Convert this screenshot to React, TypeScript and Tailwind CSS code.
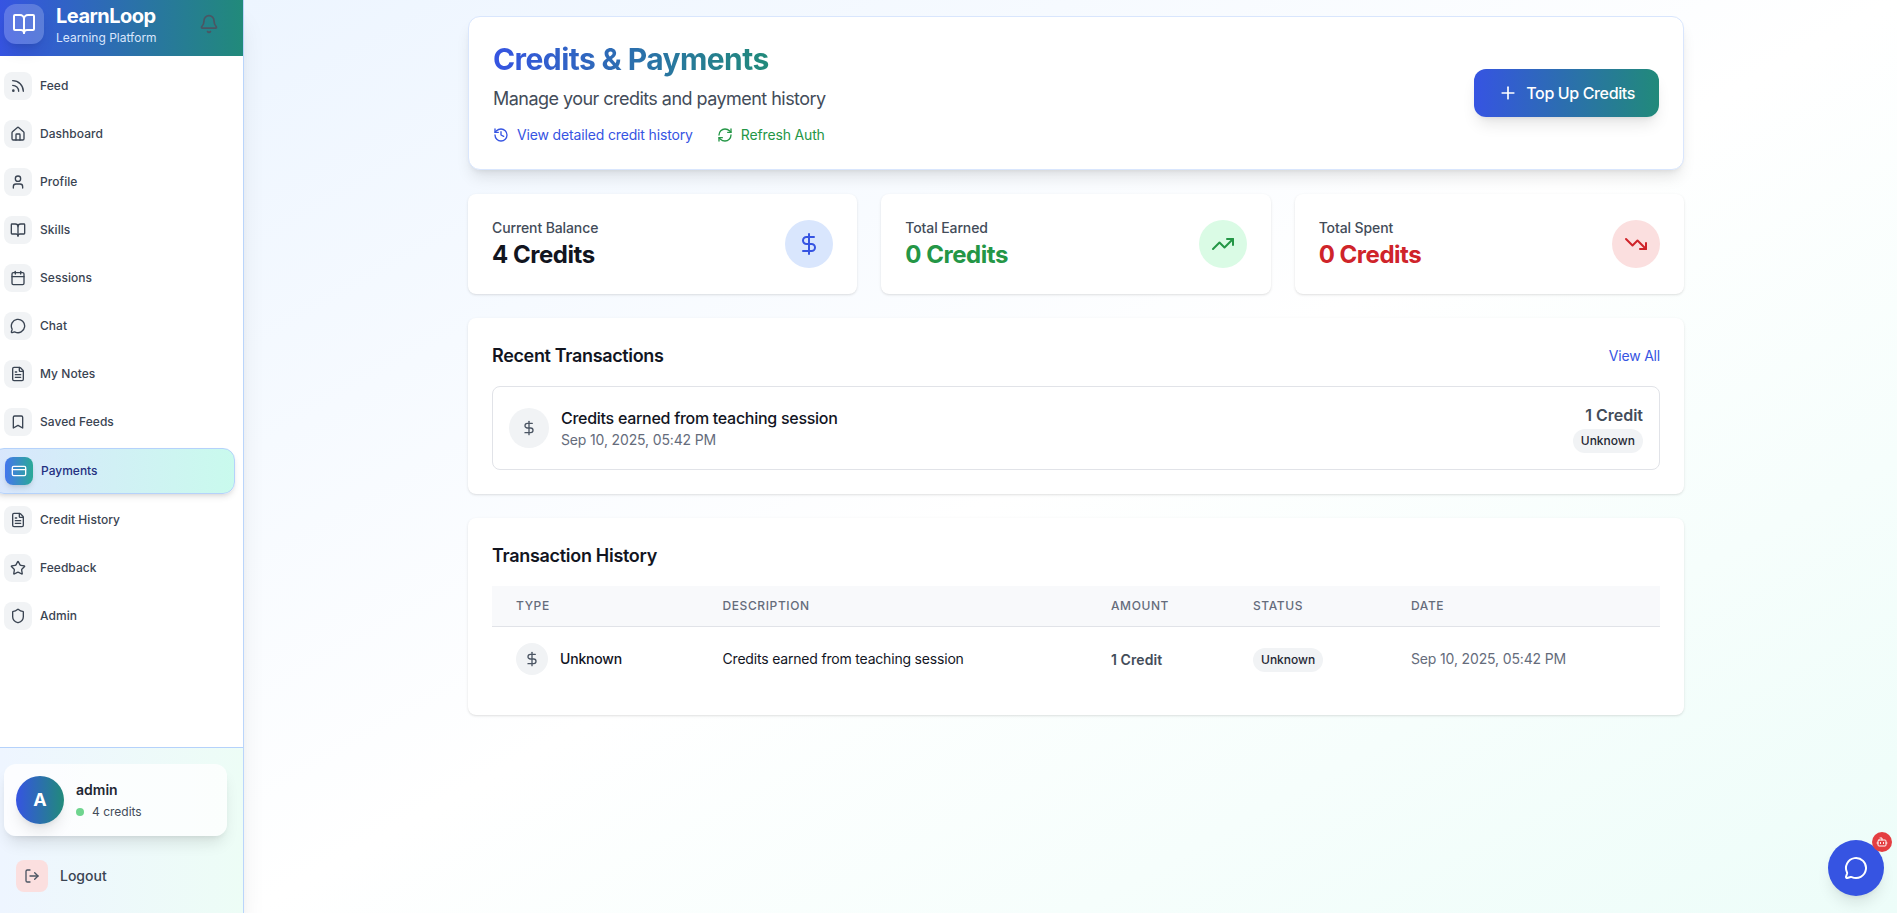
import React from "react";
import {
  Bell,
  BookOpen,
  Bot,
  Calendar,
  CreditCard,
  DollarSign,
  FileText,
  History,
  House,
  LogOut,
  MessageCircle,
  Plus,
  RefreshCw,
  Rss,
  Shield,
  Star,
  TrendingDown,
  TrendingUp,
  User,
} from "lucide-react";

type IconType = React.ComponentType<{ className?: string }>;

function BookmarkOutline({ className }: { className?: string }) {
  return (
    <svg
      viewBox="0 0 24 24"
      fill="none"
      stroke="currentColor"
      strokeWidth="2"
      strokeLinecap="round"
      strokeLinejoin="round"
      className={className}
    >
      <path d="m19 21-7-4-7 4V5a2 2 0 0 1 2-2h10a2 2 0 0 1 2 2v16z" />
    </svg>
  );
}

const navItems: { label: string; icon: IconType; active?: boolean }[] = [
  { label: "Feed", icon: Rss },
  { label: "Dashboard", icon: House },
  { label: "Profile", icon: User },
  { label: "Skills", icon: BookOpen },
  { label: "Sessions", icon: Calendar },
  { label: "Chat", icon: MessageCircle },
  { label: "My Notes", icon: FileText },
  { label: "Saved Feeds", icon: BookmarkOutline },
  { label: "Payments", icon: CreditCard, active: true },
  { label: "Credit History", icon: FileText },
  { label: "Feedback", icon: Star },
  { label: "Admin", icon: Shield },
];

function NavItem({ label, icon: Icon, active }: { label: string; icon: IconType; active?: boolean }) {
  if (active) {
    return (
      <li className="-ml-2 mr-2 flex h-[46px] items-center gap-2 rounded-xl border border-[#b5d2fb] bg-linear-to-r/srgb from-[#d9e6fd] to-[#c9faed] pl-3 text-xs font-medium text-[#243081] shadow-md">
        <span className="flex size-7 items-center justify-center rounded-lg bg-linear-to-r/srgb from-[#4576ed] to-[#2aa997] text-white shadow-md">
          <Icon className="size-4" />
        </span>
        <span>{label}</span>
      </li>
    );
  }
  return (
    <li className="flex h-11 items-center gap-2 pl-1 text-xs font-medium tracking-[0.05px] text-[#3a4452]">
      <span className="flex size-7 items-center justify-center rounded-lg bg-[#f1f3f5]">
        <Icon className="size-4" />
      </span>
      <span>{label}</span>
    </li>
  );
}

function Sidebar() {
  return (
    <aside className="relative z-10 flex w-[244px] shrink-0 flex-col overflow-clip border-r border-[#bad5fb] bg-white shadow-xl">
      <div className="flex h-14 items-start justify-between bg-linear-to-r/srgb from-[#3654e2] to-[#218a7a] pl-1 pr-6">
        <div className="flex gap-3">
          <div className="mt-1 flex size-10 items-center justify-center rounded-xl bg-white/20 text-white shadow-lg">
            <BookOpen className="size-6" />
          </div>
          <div className="flex flex-col pt-0.5">
            <h1 className="text-xl font-bold leading-7 tracking-[-0.5px] text-white">LearnLoop</h1>
            <p className="text-xs leading-4 text-[#d9e6fd]">Learning Platform</p>
          </div>
        </div>
        <Bell className="mt-3.5 size-5 text-[#4b5563]" />
      </div>
      <ul className="flex flex-1 flex-col gap-1 pt-2">
        {navItems.map((item) => (
          <NavItem key={item.label} {...item} />
        ))}
      </ul>
      <div className="flex h-[166px] flex-col border-t border-[#b5d2fb] bg-linear-to-r/srgb from-[#eef5ff] to-[#edfdf6] pl-1 pr-4 pt-4">
        <div className="flex h-[72px] items-center gap-3 rounded-xl bg-white/80 px-3 shadow-lg">
          <div className="flex size-12 items-center justify-center rounded-full bg-linear-to-r/srgb from-[#3654e2] to-[#218a7a] text-lg font-bold text-white shadow-lg">
            A
          </div>
          <div className="pt-0.5">
            <p className="text-sm font-semibold leading-5 text-[#1f2733]">admin</p>
            <p className="mt-0.5 flex items-center gap-2 text-xs leading-5 text-[#434c59]">
              <span className="size-2 rounded-full bg-[#6fd58f]" />
              4 credits
            </p>
          </div>
        </div>
        <button className="mt-3 flex h-14 items-center gap-3 px-3 text-sm font-medium text-[#3a4452]">
          <span className="flex size-8 items-center justify-center rounded-lg bg-[#fbdfdf]">
            <LogOut className="size-4 text-[#4b5563]" />
          </span>
          Logout
        </button>
      </div>
    </aside>
  );
}

function StatCard(props: { label: string; value: string; valueClass: string; badgeClass: string; icon: IconType }) {
  const Icon = props.icon;
  return (
    <div className="flex h-[100px] items-center justify-between rounded-lg bg-white p-6 shadow-sm">
      <div>
        <p className="text-sm font-medium tracking-[-0.11px] text-[#434c59]">{props.label}</p>
        <p className={"-mb-px pt-px text-2xl font-bold leading-8 tracking-[-0.47px] " + props.valueClass}>
          {props.value}
        </p>
      </div>
      <div className={"flex size-12 items-center justify-center rounded-full " + props.badgeClass}>
        <Icon className="size-6" />
      </div>
    </div>
  );
}

function StatusBadge() {
  return (
    <span className="inline-flex h-6 items-center rounded-full bg-[#f1f3f5] px-2 text-xs font-medium text-[#1f2733]">
      Unknown
    </span>
  );
}

const columns = "grid grid-cols-[206.5px_388.5px_142px_158px_1fr] [&>*]:px-6";

export default function App() {
  return (
    <div className="flex h-[913px] overflow-hidden font-['Inter',sans-serif] text-[#12151f]">
      <Sidebar />
      <main className="flex flex-1 justify-center bg-linear-to-br/srgb from-[#edf5ff] via-white to-[#edfdf9] pl-[11px] pt-4">
        <div className="flex w-[1216px] flex-col gap-6">
          <section className="flex h-[154px] items-center justify-between rounded-xl border border-[#d9e6fd] bg-white px-6 shadow-lg">
            <div>
              <h2 className="w-fit bg-linear-to-r/srgb from-[#3654e2] to-[#218a7a] bg-clip-text text-3xl font-bold tracking-[-0.58px] text-transparent">
                Credits &amp; Payments
              </h2>
              <p className="mt-2 text-lg leading-7 tracking-[-0.54px] text-[#434c59]">
                Manage your credits and payment history
              </p>
              <div className="mt-3 flex gap-6 text-sm leading-5 tracking-[-0.15px]">
                <a className="flex items-center gap-2 text-[#3654e2]">
                  <History className="size-4" />
                  View detailed credit history
                </a>
                <a className="flex items-center gap-2 text-[#249646]">
                  <RefreshCw className="size-4" />
                  Refresh Auth
                </a>
              </div>
            </div>
            <button className="flex h-12 items-center gap-2 rounded-xl bg-linear-to-r/srgb from-[#3654e2] to-[#218a7a] px-6 font-medium tracking-[-0.37px] text-white shadow-lg">
              <Plus className="size-5" />
              Top Up Credits
            </button>
          </section>

          <section className="grid grid-cols-3 gap-6">
            <StatCard
              label="Current Balance"
              value="4 Credits"
              valueClass="text-[#12151f]"
              badgeClass="bg-[#d9e6fd] text-[#3654e2]"
              icon={DollarSign}
            />
            <StatCard
              label="Total Earned"
              value="0 Credits"
              valueClass="text-[#249646]"
              badgeClass="bg-[#dafbe5] text-[#249646]"
              icon={TrendingUp}
            />
            <StatCard
              label="Total Spent"
              value="0 Credits"
              valueClass="text-[#cf242a]"
              badgeClass="bg-[#fbdfdf] text-[#cf242a]"
              icon={TrendingDown}
            />
          </section>

          <section className="rounded-lg bg-white p-6 shadow-sm">
            <div className="flex items-center justify-between">
              <h3 className="text-lg font-semibold leading-7 tracking-[-0.34px]">Recent Transactions</h3>
              <a className="text-sm tracking-[-0.2px] text-[#3654e2]">View All</a>
            </div>
            <div className="mt-4 flex h-[84px] items-center justify-between rounded-lg border border-[#e1e3e8] px-4">
              <div className="flex items-center gap-3">
                <div className="flex size-10 items-center justify-center rounded-full bg-[#f1f3f5] text-[#4b5563]">
                  <DollarSign className="size-4" />
                </div>
                <div>
                  <p className="font-medium leading-6 tracking-[-0.28px]">Credits earned from teaching session</p>
                  <p className="text-sm leading-5 tracking-[-0.15px] text-[#656c7b]">Sep 10, 2025, 05:42 PM</p>
                </div>
              </div>
              <div className="flex flex-col items-end gap-0.5">
                <p className="font-semibold leading-6 text-[#434c59]">1 Credit</p>
                <StatusBadge />
              </div>
            </div>
          </section>

          <section className="rounded-lg bg-white p-6 shadow-sm">
            <h3 className="text-lg font-semibold leading-7 tracking-[-0.3px]">Transaction History</h3>
            <div className={columns + " mt-4 h-[41px] items-center border-b border-[#e1e3e8] bg-[#f8f9fb] text-xs font-medium tracking-wider text-[#656c7b]"}>
              <span>TYPE</span>
              <span>DESCRIPTION</span>
              <span>AMOUNT</span>
              <span>STATUS</span>
              <span>DATE</span>
            </div>
            <div className={columns + " h-16 items-center text-sm"}>
              <div className="flex items-center gap-3">
                <span className="flex size-8 items-center justify-center rounded-full bg-[#f1f3f5] text-[#4b5563]">
                  <DollarSign className="size-4" />
                </span>
                <span className="font-medium tracking-[-0.2px]">Unknown</span>
              </div>
              <span className="tracking-[-0.19px]">Credits earned from teaching session</span>
              <span className="pt-0.5 font-semibold tracking-[0.08px] text-[#434c59]">1 Credit</span>
              <span className="flex pt-0.5">
                <StatusBadge />
              </span>
              <span className="tracking-[-0.15px] text-[#656c7b]">Sep 10, 2025, 05:42 PM</span>
            </div>
          </section>
        </div>
      </main>

      <button className="fixed bottom-[17px] right-[13px] flex size-14 items-center justify-center rounded-full bg-[#3654e2] text-white shadow-lg">
        <MessageCircle className="size-6" />
        <span className="absolute -right-2 -top-2 flex size-5 items-center justify-center rounded-full bg-[#e43e41]">
          <Bot className="size-3" />
        </span>
      </button>
    </div>
  );
}
